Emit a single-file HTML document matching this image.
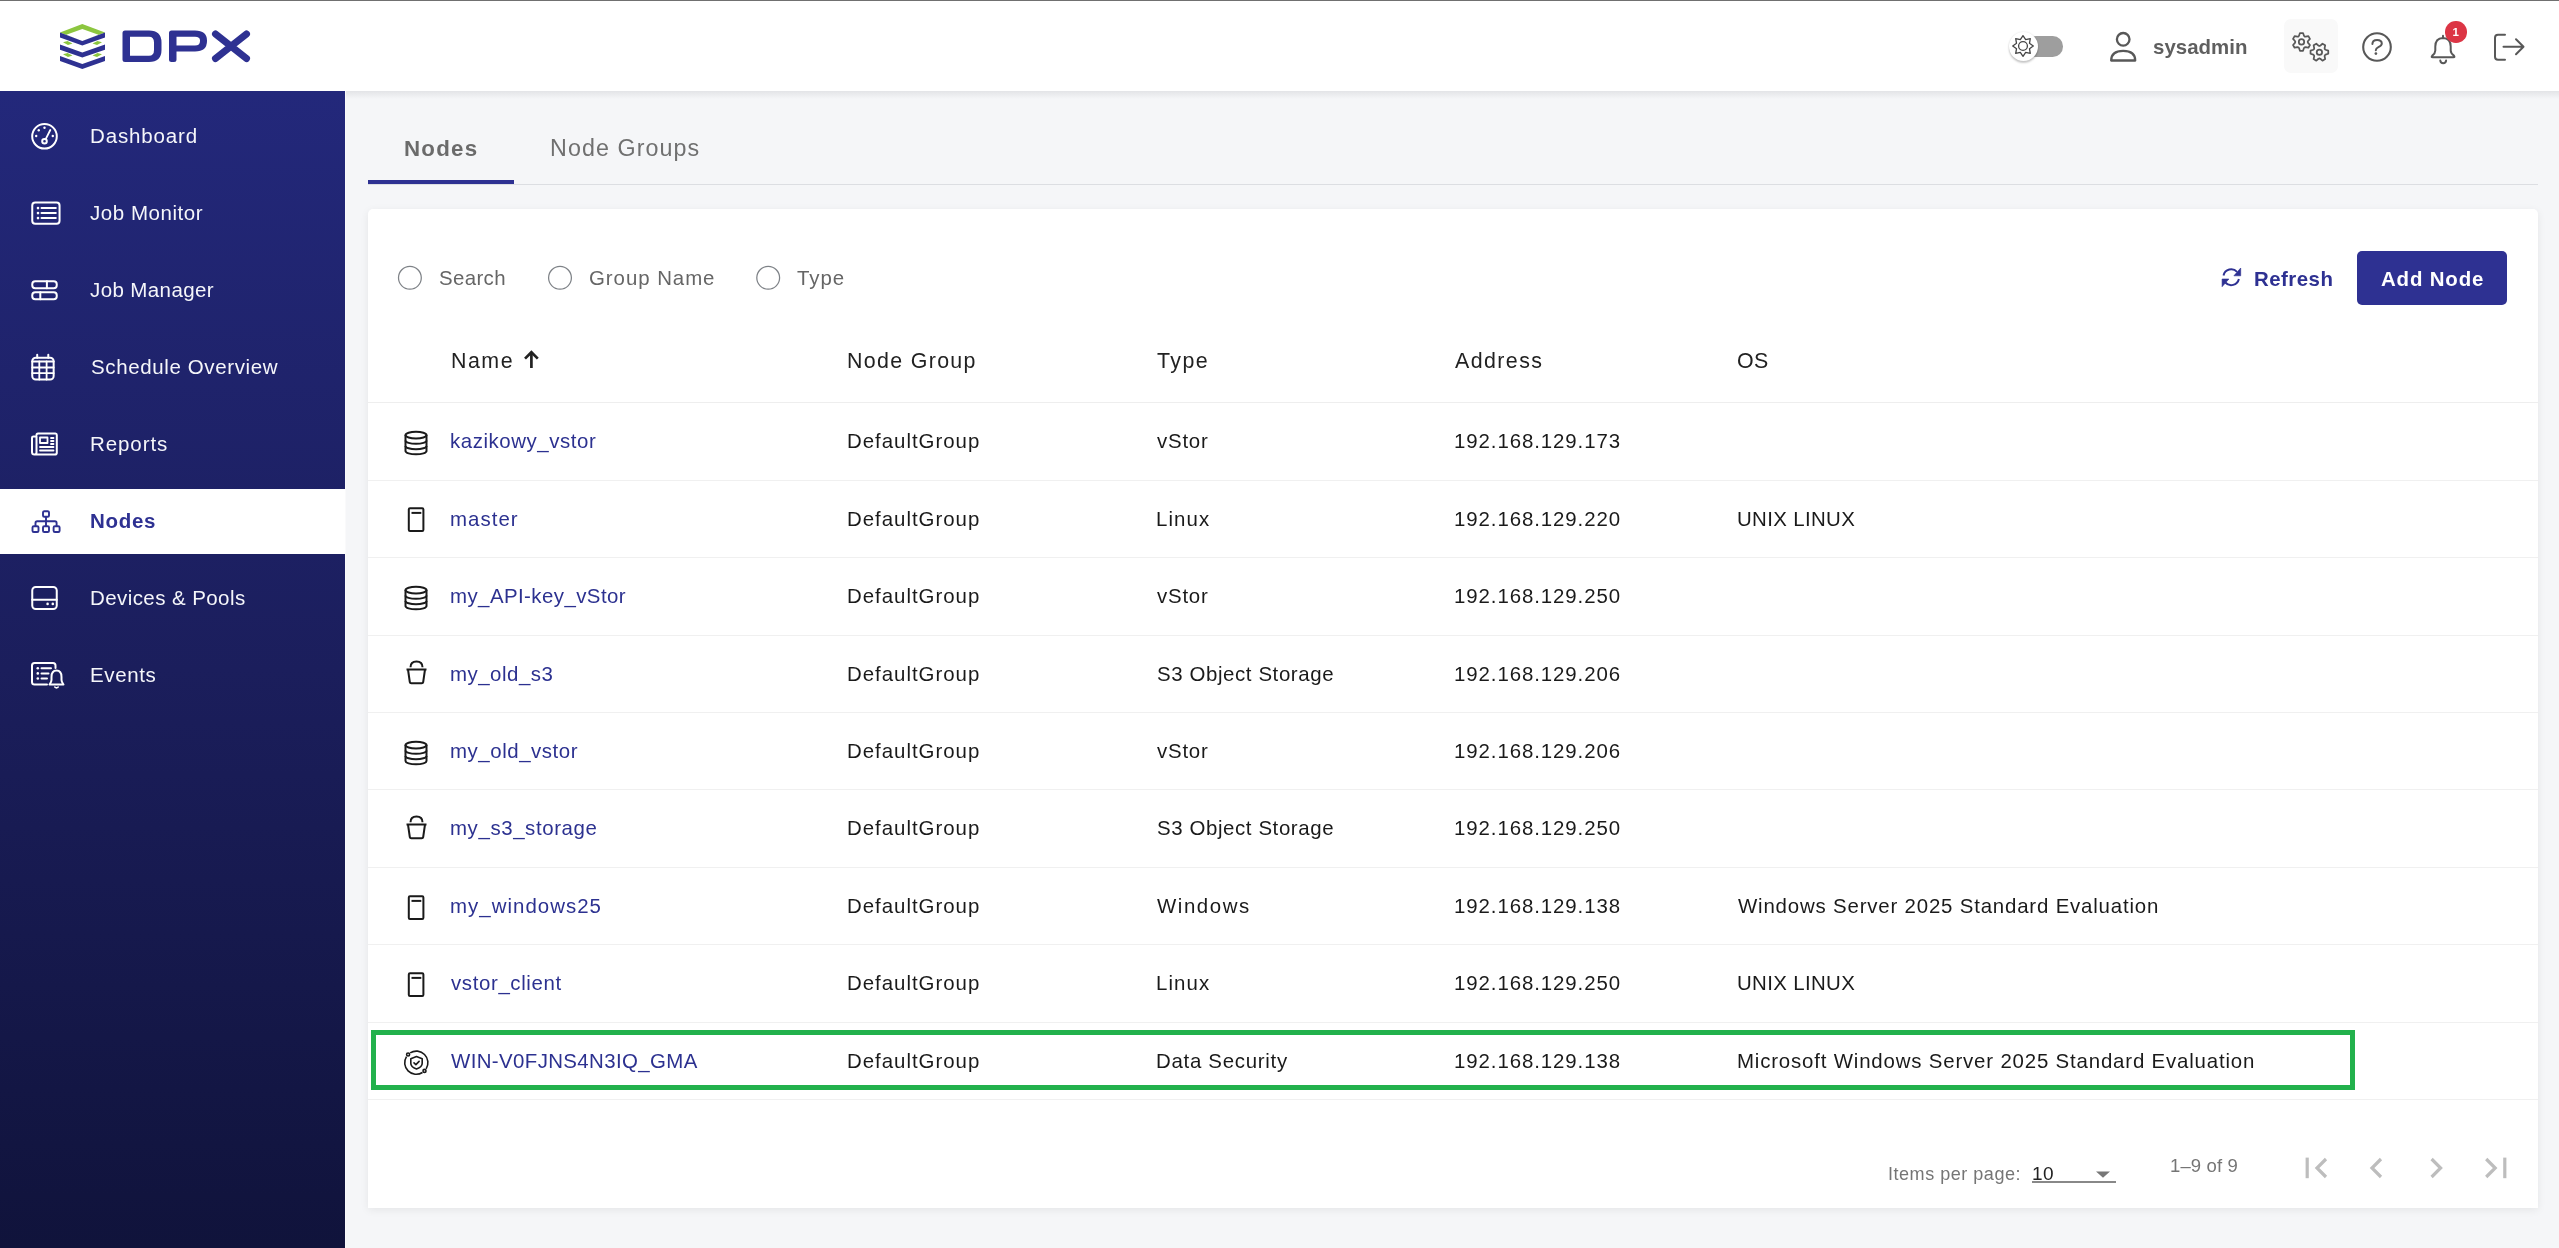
<!DOCTYPE html><html><head><meta charset="utf-8"><style>
*{box-sizing:border-box;margin:0;padding:0}
html,body{width:2559px;height:1248px;overflow:hidden}
body{position:relative;background:#f5f6f8;font-family:"Liberation Sans",sans-serif;color:#1a1a1a}
.a{position:absolute}
.t{position:absolute;white-space:nowrap;line-height:1;will-change:transform}
svg{position:absolute;overflow:visible}
</style></head><body>
<div class="a" style="left:0;top:0;width:2559px;height:1px;background:#707070"></div>
<div class="a" style="left:0;top:1px;width:2559px;height:90px;background:#fff"></div>
<div class="a" style="left:0;top:91px;width:345px;height:1157px;background:linear-gradient(180deg,#23287b 0%,#1b1e5c 50%,#10133b 100%)"></div>
<div class="a" style="left:345px;top:91px;width:1px;height:1157px;background:#fafafb"></div>
<div class="a" style="left:346px;top:91px;width:2213px;height:8px;background:linear-gradient(#e3e4e7,#f5f6f8)"></div>
<svg style="left:60px;top:24px" width="45" height="46" viewBox="0 0 45 46">
<path d="M0 8.4 L22.3 0 L45 8.4 L22.3 16.9 Z M22.3 4.9 L6.3 10.8 L22.3 16.9 L38.5 10.8 Z" fill="#8cc63f" fill-rule="evenodd"/>
<path d="M0 8.4 L22.3 16.9 L45 8.4 L45 13.6 L22.3 21.6 L0 13.6 Z" fill="#2e3192"/>
<path d="M0 20.6 L22.3 28.6 L45 20.6 L45 25.8 L22.3 33.6 L0 25.8 Z" fill="#2e3192"/>
<path d="M0 31.9 L22.3 39.9 L45 31.9 L45 37.1 L22.3 45 L0 37.1 Z" fill="#2e3192"/>
<path d="M3 18.2 L7.5 17 L12.5 19.6 L8 21 Z M32.5 19.6 L37.5 17 L42 18.2 L37 21 Z M3 30.2 L7.5 29 L12.5 31.6 L8 33 Z M32.5 31.6 L37.5 29 L42 30.2 L37 33 Z" fill="#8cc63f"/>
</svg>
<svg style="left:122px;top:30px" width="130" height="34" viewBox="0 0 130 34">
<path d="M3 0.5 H27 Q39.5 0.5 39.5 12.5 V20 Q39.5 32 27 32 H3 Q0.5 32 0.5 29.5 V3 Q0.5 0.5 3 0.5 Z M8 6.8 V25.8 H27 Q32 25.8 32 20 V12.5 Q32 6.8 27 6.8 Z" fill="#2e3192" fill-rule="evenodd"/>
<path d="M47 3 Q47 0.5 49.5 0.5 H73 Q85 0.5 85 10.5 V11 Q85 21.5 73 21.5 H54.5 V29.5 Q54.5 32 52 32 H49.5 Q47 32 47 29.5 Z M54.5 6.8 V15.5 H73 Q78 15.5 78 11 V10.5 Q78 6.8 73 6.8 Z" fill="#2e3192" fill-rule="evenodd"/>
<path d="M93.5 4 L124.5 28.5 M124.5 4 L93.5 28.5" stroke="#2e3192" stroke-width="7" stroke-linecap="round"/>
</svg>
<div class="a" style="left:2026px;top:36px;width:36.5px;height:20.5px;border-radius:10.25px;background:#9e9e9e"></div>
<div class="a" style="left:2008.5px;top:31.5px;width:29.5px;height:29.5px;border-radius:50%;background:#fff;box-shadow:0 2px 2px rgba(0,0,0,.2),0 0 2px rgba(0,0,0,.12)"></div>
<svg style="left:2000px;top:0" width="50" height="80" viewBox="2000 0 50 80"><g transform="translate(2000,0)"><polygon points="23.00,35.70 25.68,39.53 30.28,38.72 29.47,43.32 33.30,46.00 29.47,48.68 30.28,53.28 25.68,52.47 23.00,56.30 20.32,52.47 15.72,53.28 16.53,48.68 12.70,46.00 16.53,43.32 15.72,38.72 20.32,39.53" fill="none" stroke="#444" stroke-width="1.3" stroke-linejoin="round"/><circle cx="23" cy="46" r="4.4" fill="none" stroke="#444" stroke-width="1.3"/></g></svg>
<svg style="left:2100px;top:20px" width="50" height="50" viewBox="0 0 50 50">
<circle cx="23.2" cy="19.3" r="6.3" fill="none" stroke="#585858" stroke-width="2.3"/>
<path d="M11.2 40.5 Q11.2 30.8 23.2 30.8 Q35.2 30.8 35.2 40.5 Z" fill="none" stroke="#585858" stroke-width="2.3" stroke-linejoin="round"/>
</svg>
<div class="t" style="left:2153.00px;top:37.33px;font-size:20.43px;letter-spacing:0.038px;color:#5f5f5f;font-weight:bold;">sysadmin</div>
<div class="a" style="left:2284px;top:19px;width:54px;height:54px;border-radius:7px;background:#f9f9f9"></div>
<svg style="left:0;top:0" width="2559" height="91" viewBox="0 0 2559 91"><polygon points="2299.03,35.78 2299.94,33.04 2303.06,33.04 2303.97,35.78 2304.60,36.53 2305.56,36.70 2308.39,36.11 2309.96,38.82 2308.04,40.98 2307.70,41.90 2308.04,42.82 2309.96,44.98 2308.39,47.69 2305.56,47.10 2304.60,47.27 2303.97,48.02 2303.06,50.76 2299.94,50.76 2299.03,48.02 2298.40,47.27 2297.44,47.10 2294.61,47.69 2293.04,44.98 2294.96,42.82 2295.30,41.90 2294.96,40.98 2293.04,38.82 2294.61,36.11 2297.44,36.70 2298.40,36.53" fill="none" stroke="#585858" stroke-width="1.75" stroke-linejoin="round"/><circle cx="2301.5" cy="41.9" r="2.7" fill="none" stroke="#585858" stroke-width="1.75"/><polygon points="2325.52,49.73 2328.26,50.64 2328.26,53.76 2325.52,54.67 2324.77,55.30 2324.60,56.26 2325.19,59.09 2322.48,60.66 2320.32,58.74 2319.40,58.40 2318.48,58.74 2316.32,60.66 2313.61,59.09 2314.20,56.26 2314.03,55.30 2313.28,54.67 2310.54,53.76 2310.54,50.64 2313.28,49.73 2314.03,49.10 2314.20,48.14 2313.61,45.31 2316.32,43.74 2318.48,45.66 2319.40,46.00 2320.32,45.66 2322.48,43.74 2325.19,45.31 2324.60,48.14 2324.77,49.10" fill="none" stroke="#585858" stroke-width="1.75" stroke-linejoin="round"/><circle cx="2319.4" cy="52.2" r="2.7" fill="none" stroke="#585858" stroke-width="1.75"/></svg>
<svg style="left:2357px;top:27px" width="40" height="40" viewBox="0 0 40 40">
<circle cx="20" cy="20" r="13.8" fill="none" stroke="#585858" stroke-width="2.1"/>
<path d="M15.4 17.1 Q15.4 12.9 20.1 12.9 Q24.8 12.9 24.8 16.5 Q24.8 18.6 21.4 20.2 Q18.9 21.4 18.8 23.2" fill="none" stroke="#585858" stroke-width="2" stroke-linecap="round"/>
<circle cx="18.9" cy="26.6" r="1.35" fill="#585858"/>
</svg>
<svg style="left:2420px;top:20px" width="50" height="50" viewBox="0 0 50 50">
<path d="M23 17.9 Q15.3 18.2 15.3 26.5 V30.5 Q15.3 33.2 12.3 35.6 Q10.8 37.3 12.8 37.3 H33.4 Q35.2 37.3 33.9 35.6 Q30.7 33.2 30.7 30.5 V26.5 Q30.7 18.2 23 17.9 Z" fill="none" stroke="#585858" stroke-width="2" stroke-linejoin="round"/>
<path d="M23 17.9 V15.8" stroke="#585858" stroke-width="2" stroke-linecap="round"/>
<path d="M20.3 40.6 Q20.6 43.2 23.2 43.2 Q25.8 43.2 26.1 40.6" fill="none" stroke="#585858" stroke-width="2" stroke-linecap="round"/>
</svg>
<div class="a" style="left:2445px;top:21.4px;width:21.6px;height:21.6px;border-radius:50%;background:#dc3545"></div>
<div class="t" style="left:2445px;top:27px;width:21.6px;text-align:center;font-size:11.5px;font-weight:bold;color:#fff">1</div>
<svg style="left:2485px;top:25px" width="50" height="45" viewBox="0 0 50 45">
<path d="M20 9.8 H13 Q10 9.8 10 12.8 V31.7 Q10 34.7 13 34.7 H20" fill="none" stroke="#585858" stroke-width="2" stroke-linecap="round"/>
<path d="M18.5 21.7 H38.2 M31 14.2 L38.5 21.7 L31 29.2" fill="none" stroke="#585858" stroke-width="2" stroke-linecap="round" stroke-linejoin="round"/>
</svg>
<div class="a" style="left:0;top:489px;width:345px;height:65px;background:#fff"></div>
<div class="t" style="left:90.00px;top:126.26px;font-size:20.52px;letter-spacing:0.843px;color:#f5f6fa;">Dashboard</div>
<div class="t" style="left:90.30px;top:203.26px;font-size:20.52px;letter-spacing:0.535px;color:#f5f6fa;">Job Monitor</div>
<div class="t" style="left:90.30px;top:280.26px;font-size:20.52px;letter-spacing:0.388px;color:#f5f6fa;">Job Manager</div>
<div class="t" style="left:91.00px;top:357.26px;font-size:20.52px;letter-spacing:0.611px;color:#f5f6fa;">Schedule Overview</div>
<div class="t" style="left:90.00px;top:434.26px;font-size:20.52px;letter-spacing:0.904px;color:#f5f6fa;">Reports</div>
<div class="t" style="left:90.00px;top:511.26px;font-size:20.52px;letter-spacing:0.678px;color:#2e3192;font-weight:bold;">Nodes</div>
<div class="t" style="left:90.00px;top:588.26px;font-size:20.52px;letter-spacing:0.413px;color:#f5f6fa;">Devices &amp; Pools</div>
<div class="t" style="left:90.00px;top:665.26px;font-size:20.52px;letter-spacing:0.628px;color:#f5f6fa;">Events</div>
<svg style="left:0;top:0" width="345" height="700" viewBox="0 0 345 700" fill="none" stroke="#fff" stroke-width="2" stroke-linecap="round" stroke-linejoin="round">
<circle cx="44.5" cy="136.3" r="12.3"/>
<circle cx="44.5" cy="141.2" r="2.3"/>
<path d="M45.7 139.1 L50.3 130" stroke-width="1.8"/>
<g fill="#fff" stroke="none"><circle cx="44.5" cy="127.8" r="1.2"/><circle cx="38.75" cy="130.3" r="1.2"/><circle cx="36.2" cy="136" r="1.2"/><circle cx="52.8" cy="136" r="1.2"/></g>
<rect x="32.25" y="202.5" width="27.3" height="21.3" rx="3"/>
<g fill="#fff" stroke="none"><circle cx="38" cy="208.1" r="1.3"/><circle cx="38" cy="213.1" r="1.3"/><circle cx="38" cy="218.1" r="1.3"/></g>
<path d="M41.5 208.1 H55.8 M41.5 213.1 H55.8 M41.5 218.1 H55.8"/>
<rect x="32.25" y="281.3" width="24.5" height="7" rx="3"/>
<rect x="32.25" y="292.3" width="24.5" height="7" rx="3"/>
<path d="M46.9 281.3 V288.3 M40.3 292.3 V299.3"/>
<rect x="32.25" y="357.8" width="21.4" height="21.8" rx="3.5"/>
<path d="M37.2 354.8 V357.8 M48.3 354.8 V357.8 M32.25 361.5 H53.65"/>
<path d="M32.25 367.5 H53.65 M32.25 373.2 H53.65 M39.3 361.5 V379.6 M46.6 361.5 V379.6" stroke-width="1.8"/>
<path d="M36.5 435 Q36.5 433.5 38 433.5 H55.5 Q56.8 433.5 56.8 435 V452.8 Q56.8 454.6 55 454.6 H34.4 Q32 454.6 32 452 V437.8 Q32 436.6 33.5 436.6 H36.5 M36.5 436.6 V452.5 Q36.5 454.6 34.4 454.6"/>
<rect x="40" y="437.5" width="7.5" height="5.5" stroke-width="1.8"/>
<path d="M51 438 H53.5 M51 441 H53.5 M51 444 H53.5 M40 447 H53.5 M40 450.5 H53.5" stroke-width="1.8"/>
<rect x="32.25" y="587" width="24.5" height="22" rx="3.5"/>
<path d="M32.25 599.7 H56.75"/>
<g fill="#fff" stroke="none"><circle cx="47.6" cy="603.9" r="1.3"/><circle cx="52.8" cy="603.9" r="1.3"/></g>
<path d="M47 684.6 H34.5 Q32 684.6 32 682 V665.5 Q32 663 34.5 663 H53 Q55.5 663 55.5 665.5 V668"/>
<g fill="#fff" stroke="none"><circle cx="37.8" cy="668.3" r="1.3"/><circle cx="37.8" cy="673.4" r="1.3"/><circle cx="37.8" cy="678.5" r="1.3"/></g>
<path d="M41.5 668.3 H51 M41.5 673.4 H48.5 M41.5 678.5 H47"/>
<path d="M56.5 670.5 Q51.5 670.5 51.5 677 V680 Q51.5 682 49.5 684.5 H63.5 Q61.5 682 61.5 680 V677 Q61.5 670.5 56.5 670.5 Z"/>
<path d="M54.8 687 Q56.5 688.8 58.2 687" stroke-width="1.6"/>
</svg>
<svg style="left:0;top:0" width="345" height="600" viewBox="0 0 345 600" fill="none" stroke="#2e3192" stroke-width="1.9" stroke-linejoin="round">
<rect x="43" y="511.2" width="6" height="5.6" rx="1.3"/>
<rect x="32.5" y="526.2" width="6" height="5.8" rx="1.3"/>
<rect x="43" y="526.2" width="6" height="5.8" rx="1.3"/>
<rect x="53.6" y="526.2" width="6" height="5.8" rx="1.3"/>
<path d="M46 516.8 V526.2 M35.5 526.2 V523 Q35.5 521.3 37.2 521.3 H54.9 Q56.6 521.3 56.6 523 V526.2"/>
</svg>
<div class="t" style="left:404.30px;top:138.46px;font-size:22.32px;letter-spacing:1.230px;color:#6b6b6b;font-weight:bold;">Nodes</div>
<div class="t" style="left:550.00px;top:136.67px;font-size:23.27px;letter-spacing:1.075px;color:#707070;">Node Groups</div>
<div class="a" style="left:368px;top:184px;width:2170px;height:1px;background:#dcdee2"></div>
<div class="a" style="left:368px;top:180px;width:146px;height:4px;background:#2e3192"></div>
<div class="a" style="left:368px;top:208.5px;width:2170px;height:999.5px;background:#fff;border-radius:5px 5px 0 0;box-shadow:0 2px 8px rgba(0,0,0,.07)"></div>
<svg style="left:0;top:250px" width="900" height="60" viewBox="0 250 900 60" fill="none" stroke="#7e8287" stroke-width="1.25"><circle cx="409.9" cy="277.8" r="11.4"/><circle cx="560" cy="277.8" r="11.4"/><circle cx="768.2" cy="277.8" r="11.4"/></svg>
<div class="t" style="left:439.30px;top:268.43px;font-size:20.43px;letter-spacing:0.370px;color:#666;">Search</div>
<div class="t" style="left:588.60px;top:268.43px;font-size:20.43px;letter-spacing:0.950px;color:#666;">Group Name</div>
<div class="t" style="left:797.00px;top:268.43px;font-size:20.43px;letter-spacing:0.961px;color:#666;">Type</div>
<svg style="left:2210px;top:260px" width="40" height="35" viewBox="2210 260 40 35" fill="none" stroke="#2e3192" stroke-width="1.95">
<path d="M2223.50 275.42 A7.9 7.9 0 0 1 2237.07 271.91"/>
<path d="M2238.90 278.98 A7.9 7.9 0 0 1 2225.33 282.49"/>
<path d="M2240.7 268 V275.8 H2233.9 Z M2222.1 279 H2228.9 L2222.1 286.7 Z" fill="#2e3192" stroke="#2e3192" stroke-width="0.6" stroke-linejoin="round"/>
</svg>
<div class="t" style="left:2254.00px;top:268.73px;font-size:20.43px;letter-spacing:0.472px;color:#2e3192;font-weight:bold;">Refresh</div>
<div class="a" style="left:2357px;top:251px;width:150px;height:54px;border-radius:5px;background:#2e3192"></div>
<div class="t" style="left:2381.00px;top:268.73px;font-size:20.43px;letter-spacing:0.847px;color:#ffffff;font-weight:bold;">Add Node</div>
<div class="t" style="left:451.00px;top:350.74px;font-size:21.38px;letter-spacing:1.523px;color:#222;">Name</div>
<svg style="left:518px;top:345px" width="26" height="28" viewBox="0 0 26 28" fill="none" stroke="#222" stroke-width="2.7">
<path d="M13.4 23 V8"/><path d="M7 13.6 L13.4 7.2 L19.8 13.6" stroke-linejoin="miter"/></svg>
<div class="t" style="left:847.40px;top:350.74px;font-size:21.38px;letter-spacing:1.338px;color:#222;">Node Group</div>
<div class="t" style="left:1157.00px;top:350.74px;font-size:21.38px;letter-spacing:1.416px;color:#222;">Type</div>
<div class="t" style="left:1455.30px;top:350.74px;font-size:21.38px;letter-spacing:1.429px;color:#222;">Address</div>
<div class="t" style="left:1737.20px;top:350.74px;font-size:21.38px;letter-spacing:0.274px;color:#222;">OS</div>
<div class="a" style="left:368px;top:402px;width:2170px;height:1px;background:#eeeeee"></div>
<svg style="left:400px;top:424.90px" width="32" height="32" viewBox="0 0 32 32" fill="none" stroke="#1a1a1a" stroke-width="2">
<ellipse cx="16" cy="10.1" rx="10.5" ry="3.3"/>
<path d="M5.5 10.1 V26 A10.5 3.3 0 0 0 26.5 26 V10.1"/>
<path d="M5.5 15.5 A10.5 3.3 0 0 0 26.5 15.5"/>
<path d="M5.5 20.9 A10.5 3.3 0 0 0 26.5 20.9"/>
</svg>
<div class="t" style="left:449.70px;top:431.23px;font-size:20.43px;letter-spacing:0.565px;color:#2c3190;">kazikowy_vstor</div>
<div class="t" style="left:847.40px;top:431.23px;font-size:20.43px;letter-spacing:0.981px;color:#1a1a1a;">DefaultGroup</div>
<div class="t" style="left:1157.00px;top:431.23px;font-size:20.43px;letter-spacing:0.784px;color:#1a1a1a;">vStor</div>
<div class="t" style="left:1454.30px;top:431.23px;font-size:20.43px;letter-spacing:0.910px;color:#1a1a1a;">192.168.129.173</div>
<div class="a" style="left:368px;top:480px;width:2170px;height:1px;background:#f0f0f0"></div>
<svg style="left:400px;top:502.34px" width="32" height="32" viewBox="0 0 32 32" fill="none" stroke="#1a1a1a" stroke-width="2">
<rect x="8.8" y="6.2" width="14.6" height="22.8" rx="1.2"/>
<path d="M11.5 10.9 H21.3"/>
</svg>
<div class="t" style="left:449.80px;top:508.67px;font-size:20.43px;letter-spacing:1.038px;color:#2c3190;">master</div>
<div class="t" style="left:847.40px;top:508.67px;font-size:20.43px;letter-spacing:0.981px;color:#1a1a1a;">DefaultGroup</div>
<div class="t" style="left:1156.00px;top:508.67px;font-size:20.43px;letter-spacing:1.097px;color:#1a1a1a;">Linux</div>
<div class="t" style="left:1454.30px;top:508.67px;font-size:20.43px;letter-spacing:0.910px;color:#1a1a1a;">192.168.129.220</div>
<div class="t" style="left:1736.50px;top:508.67px;font-size:20.43px;letter-spacing:0.356px;color:#1a1a1a;">UNIX LINUX</div>
<div class="a" style="left:368px;top:557px;width:2170px;height:1px;background:#f0f0f0"></div>
<svg style="left:400px;top:579.78px" width="32" height="32" viewBox="0 0 32 32" fill="none" stroke="#1a1a1a" stroke-width="2">
<ellipse cx="16" cy="10.1" rx="10.5" ry="3.3"/>
<path d="M5.5 10.1 V26 A10.5 3.3 0 0 0 26.5 26 V10.1"/>
<path d="M5.5 15.5 A10.5 3.3 0 0 0 26.5 15.5"/>
<path d="M5.5 20.9 A10.5 3.3 0 0 0 26.5 20.9"/>
</svg>
<div class="t" style="left:449.80px;top:586.11px;font-size:20.43px;letter-spacing:0.433px;color:#2c3190;">my_API-key_vStor</div>
<div class="t" style="left:847.40px;top:586.11px;font-size:20.43px;letter-spacing:0.981px;color:#1a1a1a;">DefaultGroup</div>
<div class="t" style="left:1157.00px;top:586.11px;font-size:20.43px;letter-spacing:0.784px;color:#1a1a1a;">vStor</div>
<div class="t" style="left:1454.30px;top:586.11px;font-size:20.43px;letter-spacing:0.910px;color:#1a1a1a;">192.168.129.250</div>
<div class="a" style="left:368px;top:635px;width:2170px;height:1px;background:#f0f0f0"></div>
<svg style="left:400px;top:657.22px" width="32" height="32" viewBox="0 0 32 32" fill="none" stroke="#1a1a1a" stroke-width="2" stroke-linejoin="round">
<path d="M10.5 10.3 Q10.5 4.5 16.5 4.5 Q22.5 4.5 22.5 10.3"/>
<path d="M6.5 12.5 H26.5 M8 12.5 L9.8 25 Q10 26.3 11.3 26.3 H21.7 Q23 26.3 23.2 25 L25 12.5"/>
</svg>
<div class="t" style="left:449.80px;top:663.55px;font-size:20.43px;letter-spacing:0.512px;color:#2c3190;">my_old_s3</div>
<div class="t" style="left:847.40px;top:663.55px;font-size:20.43px;letter-spacing:0.981px;color:#1a1a1a;">DefaultGroup</div>
<div class="t" style="left:1157.00px;top:663.55px;font-size:20.43px;letter-spacing:0.605px;color:#1a1a1a;">S3 Object Storage</div>
<div class="t" style="left:1454.30px;top:663.55px;font-size:20.43px;letter-spacing:0.910px;color:#1a1a1a;">192.168.129.206</div>
<div class="a" style="left:368px;top:712px;width:2170px;height:1px;background:#f0f0f0"></div>
<svg style="left:400px;top:734.66px" width="32" height="32" viewBox="0 0 32 32" fill="none" stroke="#1a1a1a" stroke-width="2">
<ellipse cx="16" cy="10.1" rx="10.5" ry="3.3"/>
<path d="M5.5 10.1 V26 A10.5 3.3 0 0 0 26.5 26 V10.1"/>
<path d="M5.5 15.5 A10.5 3.3 0 0 0 26.5 15.5"/>
<path d="M5.5 20.9 A10.5 3.3 0 0 0 26.5 20.9"/>
</svg>
<div class="t" style="left:449.80px;top:740.99px;font-size:20.43px;letter-spacing:0.551px;color:#2c3190;">my_old_vstor</div>
<div class="t" style="left:847.40px;top:740.99px;font-size:20.43px;letter-spacing:0.981px;color:#1a1a1a;">DefaultGroup</div>
<div class="t" style="left:1157.00px;top:740.99px;font-size:20.43px;letter-spacing:0.784px;color:#1a1a1a;">vStor</div>
<div class="t" style="left:1454.30px;top:740.99px;font-size:20.43px;letter-spacing:0.910px;color:#1a1a1a;">192.168.129.206</div>
<div class="a" style="left:368px;top:789px;width:2170px;height:1px;background:#f0f0f0"></div>
<svg style="left:400px;top:812.10px" width="32" height="32" viewBox="0 0 32 32" fill="none" stroke="#1a1a1a" stroke-width="2" stroke-linejoin="round">
<path d="M10.5 10.3 Q10.5 4.5 16.5 4.5 Q22.5 4.5 22.5 10.3"/>
<path d="M6.5 12.5 H26.5 M8 12.5 L9.8 25 Q10 26.3 11.3 26.3 H21.7 Q23 26.3 23.2 25 L25 12.5"/>
</svg>
<div class="t" style="left:449.80px;top:818.43px;font-size:20.43px;letter-spacing:0.603px;color:#2c3190;">my_s3_storage</div>
<div class="t" style="left:847.40px;top:818.43px;font-size:20.43px;letter-spacing:0.981px;color:#1a1a1a;">DefaultGroup</div>
<div class="t" style="left:1157.00px;top:818.43px;font-size:20.43px;letter-spacing:0.605px;color:#1a1a1a;">S3 Object Storage</div>
<div class="t" style="left:1454.30px;top:818.43px;font-size:20.43px;letter-spacing:0.910px;color:#1a1a1a;">192.168.129.250</div>
<div class="a" style="left:368px;top:867px;width:2170px;height:1px;background:#f0f0f0"></div>
<svg style="left:400px;top:889.54px" width="32" height="32" viewBox="0 0 32 32" fill="none" stroke="#1a1a1a" stroke-width="2">
<rect x="8.8" y="6.2" width="14.6" height="22.8" rx="1.2"/>
<path d="M11.5 10.9 H21.3"/>
</svg>
<div class="t" style="left:449.80px;top:895.87px;font-size:20.43px;letter-spacing:1.031px;color:#2c3190;">my_windows25</div>
<div class="t" style="left:847.40px;top:895.87px;font-size:20.43px;letter-spacing:0.981px;color:#1a1a1a;">DefaultGroup</div>
<div class="t" style="left:1157.00px;top:895.87px;font-size:20.43px;letter-spacing:1.561px;color:#1a1a1a;">Windows</div>
<div class="t" style="left:1454.30px;top:895.87px;font-size:20.43px;letter-spacing:0.910px;color:#1a1a1a;">192.168.129.138</div>
<div class="t" style="left:1737.50px;top:895.87px;font-size:20.43px;letter-spacing:0.815px;color:#1a1a1a;">Windows Server 2025 Standard Evaluation</div>
<div class="a" style="left:368px;top:944px;width:2170px;height:1px;background:#f0f0f0"></div>
<svg style="left:400px;top:966.98px" width="32" height="32" viewBox="0 0 32 32" fill="none" stroke="#1a1a1a" stroke-width="2">
<rect x="8.8" y="6.2" width="14.6" height="22.8" rx="1.2"/>
<path d="M11.5 10.9 H21.3"/>
</svg>
<div class="t" style="left:450.80px;top:973.31px;font-size:20.43px;letter-spacing:0.626px;color:#2c3190;">vstor_client</div>
<div class="t" style="left:847.40px;top:973.31px;font-size:20.43px;letter-spacing:0.981px;color:#1a1a1a;">DefaultGroup</div>
<div class="t" style="left:1156.00px;top:973.31px;font-size:20.43px;letter-spacing:1.097px;color:#1a1a1a;">Linux</div>
<div class="t" style="left:1454.30px;top:973.31px;font-size:20.43px;letter-spacing:0.910px;color:#1a1a1a;">192.168.129.250</div>
<div class="t" style="left:1736.50px;top:973.31px;font-size:20.43px;letter-spacing:0.356px;color:#1a1a1a;">UNIX LINUX</div>
<div class="a" style="left:368px;top:1022px;width:2170px;height:1px;background:#f0f0f0"></div>
<svg style="left:400px;top:1044.42px" width="32" height="32" viewBox="0 0 32 32" fill="none" stroke="#1a1a1a" stroke-width="1.6">
<path d="M10.15 8.86 A11.6 11.6 0 0 1 26.14 24.85 M22.45 28.54 A11.6 11.6 0 0 1 6.46 12.55"/>
<circle cx="8.10" cy="10.50" r="1.5"/><circle cx="24.50" cy="26.90" r="1.5"/>
<path d="M16.5 12.6 L22.2 14.8 V19.2 Q22.2 23 16.5 25 Q10.8 23 10.8 19.2 V14.8 Z" stroke-linejoin="round"/>
<path d="M14 18.8 L15.9 20.6 L19.1 17.4" stroke-linecap="round" stroke-linejoin="round"/>
</svg>
<div class="t" style="left:450.80px;top:1050.75px;font-size:20.43px;letter-spacing:0.383px;color:#2c3190;">WIN-V0FJNS4N3IQ_GMA</div>
<div class="t" style="left:847.40px;top:1050.75px;font-size:20.43px;letter-spacing:0.981px;color:#1a1a1a;">DefaultGroup</div>
<div class="t" style="left:1156.00px;top:1050.75px;font-size:20.43px;letter-spacing:0.711px;color:#1a1a1a;">Data Security</div>
<div class="t" style="left:1454.30px;top:1050.75px;font-size:20.43px;letter-spacing:0.910px;color:#1a1a1a;">192.168.129.138</div>
<div class="t" style="left:1736.50px;top:1050.75px;font-size:20.43px;letter-spacing:0.822px;color:#1a1a1a;">Microsoft Windows Server 2025 Standard Evaluation</div>
<div class="a" style="left:368px;top:1099px;width:2170px;height:1px;background:#f0f0f0"></div>
<div class="a" style="left:371px;top:1030px;width:1984px;height:60px;border:5px solid #22b14c"></div>
<div class="t" style="left:1887.70px;top:1165.31px;font-size:18.05px;letter-spacing:0.516px;color:#757575;">Items per page:</div>
<div class="t" style="left:2031.60px;top:1163.52px;font-size:19.0px;letter-spacing:0.433px;color:#222;">10</div>
<div class="a" style="left:2032px;top:1181px;width:84px;height:1.5px;background:#888"></div>
<svg style="left:2090px;top:1165px" width="26" height="20" viewBox="0 0 26 20"><path d="M6 6.4 H20 L13 12.8 Z" fill="#777"/></svg>
<div class="t" style="left:2169.60px;top:1157.02px;font-size:18.52px;letter-spacing:0.111px;color:#757575;">1–9 of 9</div>
<svg style="left:2290px;top:1145px" width="230" height="45" viewBox="2290 1145 230 45" fill="none" stroke="#bdbdbd" stroke-width="3.2">
<path d="M2307.2 1157.6 V1178.2"/>
<path d="M2326 1159 L2317 1168 L2326 1177"/>
<path d="M2381 1159 L2372 1168 L2381 1177"/>
<path d="M2431.6 1159 L2440.6 1168 L2431.6 1177"/>
<path d="M2486.2 1159 L2495.2 1168 L2486.2 1177"/>
<path d="M2504.8 1157.6 V1178.2"/>
</svg>
</body></html>
